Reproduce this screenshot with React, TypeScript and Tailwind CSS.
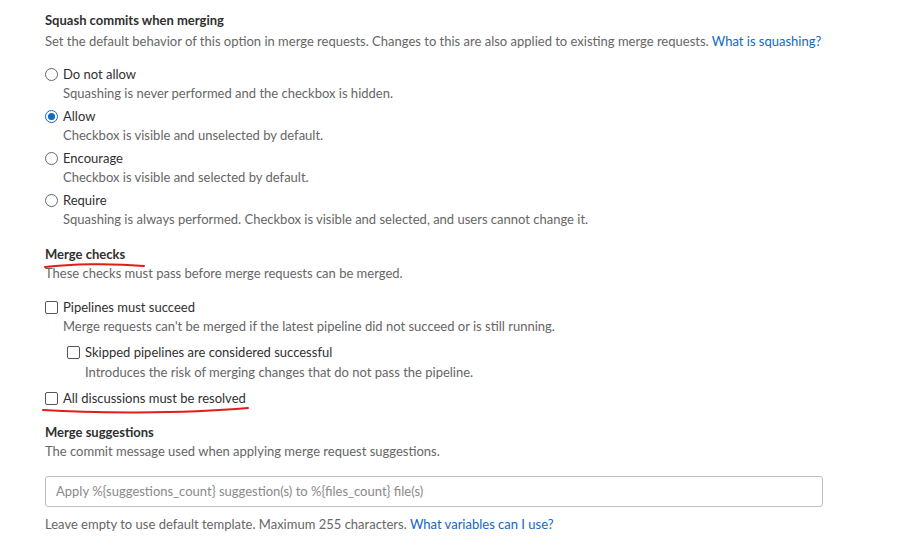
import type { ReactNode } from 'react';

const font = { fontFamily: 'Lato, "Open Sans", sans-serif' };

const Radio = ({ checked = false }: { checked?: boolean }) => (
  <span
    className={`inline-flex items-center justify-center w-[13px] h-[13px] rounded-full border shrink-0 ${
      checked ? 'border-[#1068bf] bg-white' : 'border-[#666] bg-white'
    }`}
  >
    {checked && <span className="w-[7px] h-[7px] rounded-full bg-[#1068bf]" />}
  </span>
);

const Checkbox = () => (
  <span className="inline-block w-[13px] h-[13px] rounded-[2px] border border-[#555] bg-white shrink-0" />
);

const Option = ({ control, label, help, helpGap = '' }: { control: ReactNode; label: string; help?: string; helpGap?: string }) => (
  <div className="flex flex-col">
    <div className="flex items-center gap-[5px] h-[19px]">
      {control}
      <span className="text-[#303030]">{label}</span>
    </div>
    {help && <div className={`pl-[18px] h-[19px] leading-[19px] text-[#666] ${helpGap}`}>{help}</div>}
  </div>
);

const Heading = ({ children }: { children: ReactNode }) => (
  <div className="font-bold text-[#303030] h-[19px] leading-[19px]">{children}</div>
);

export default function App() {
  return (
    <div className="relative w-[918px] h-[548px] bg-white text-[13px] leading-[19px] overflow-hidden" style={font}>
      <div className="flex flex-col pl-[45px] pt-[11px] w-[823px]">
        <Heading>Squash commits when merging</Heading>
        <div className="text-[#666] mt-[2px]">
          Set the default behavior of this option in merge requests. Changes to this are also applied to existing merge requests.{' '}
          <span className="text-[#1068bf]">What is squashing?</span>
        </div>

        <div className="flex flex-col gap-[4px] mt-[14px]">
          <Option control={<Radio />} label="Do not allow" help="Squashing is never performed and the checkbox is hidden." />
          <Option control={<Radio checked />} label="Allow" help="Checkbox is visible and unselected by default." />
          <Option control={<Radio />} label="Encourage" help="Checkbox is visible and selected by default." />
          <Option control={<Radio />} label="Require" help="Squashing is always performed. Checkbox is visible and selected, and users cannot change it." />
        </div>

        <div className="mt-[16px]">
          <Heading>Merge checks</Heading>
        </div>
        <div className="text-[#666]">These checks must pass before merge requests can be merged.</div>

        <div className="flex flex-col gap-[7px] mt-[15px]">
          <Option control={<Checkbox />} label="Pipelines must succeed" help="Merge requests can't be merged if the latest pipeline did not succeed or is still running." />
          <div className="pl-[22px]">
            <Option control={<Checkbox />} label="Skipped pipelines are considered successful" help="Introduces the risk of merging changes that do not pass the pipeline." helpGap="mt-[1px]" />
          </div>
          <Option control={<Checkbox />} label="All discussions must be resolved" />
        </div>

        <div className="mt-[15px]">
          <Heading>Merge suggestions</Heading>
        </div>
        <div className="text-[#666]">The commit message used when applying merge request suggestions.</div>

        <div className="mt-[15px] h-[31px] border border-[#bfbfbf] rounded-[3px] flex items-center px-[10px] text-[#8a8a8a]">
          Apply %{'{'}suggestions_count{'}'} suggestion(s) to %{'{'}files_count{'}'} file(s)
        </div>

        <div className="text-[#666] mt-[8px]">
          Leave empty to use default template. Maximum 255 characters.{' '}
          <span className="text-[#1068bf]">What variables can I use?</span>
        </div>
      </div>

      {/* hand-drawn annotations */}
      <svg className="absolute left-0 top-0 pointer-events-none" width="918" height="548">
        <path d="M45 267 C 70 264, 110 263, 144 266" stroke="#e31b1b" strokeWidth="2" fill="none" strokeLinecap="round" />
        <path d="M43 410 C 90 413, 180 414, 248 408" stroke="#e31b1b" strokeWidth="2" fill="none" strokeLinecap="round" />
      </svg>
    </div>
  );
}
